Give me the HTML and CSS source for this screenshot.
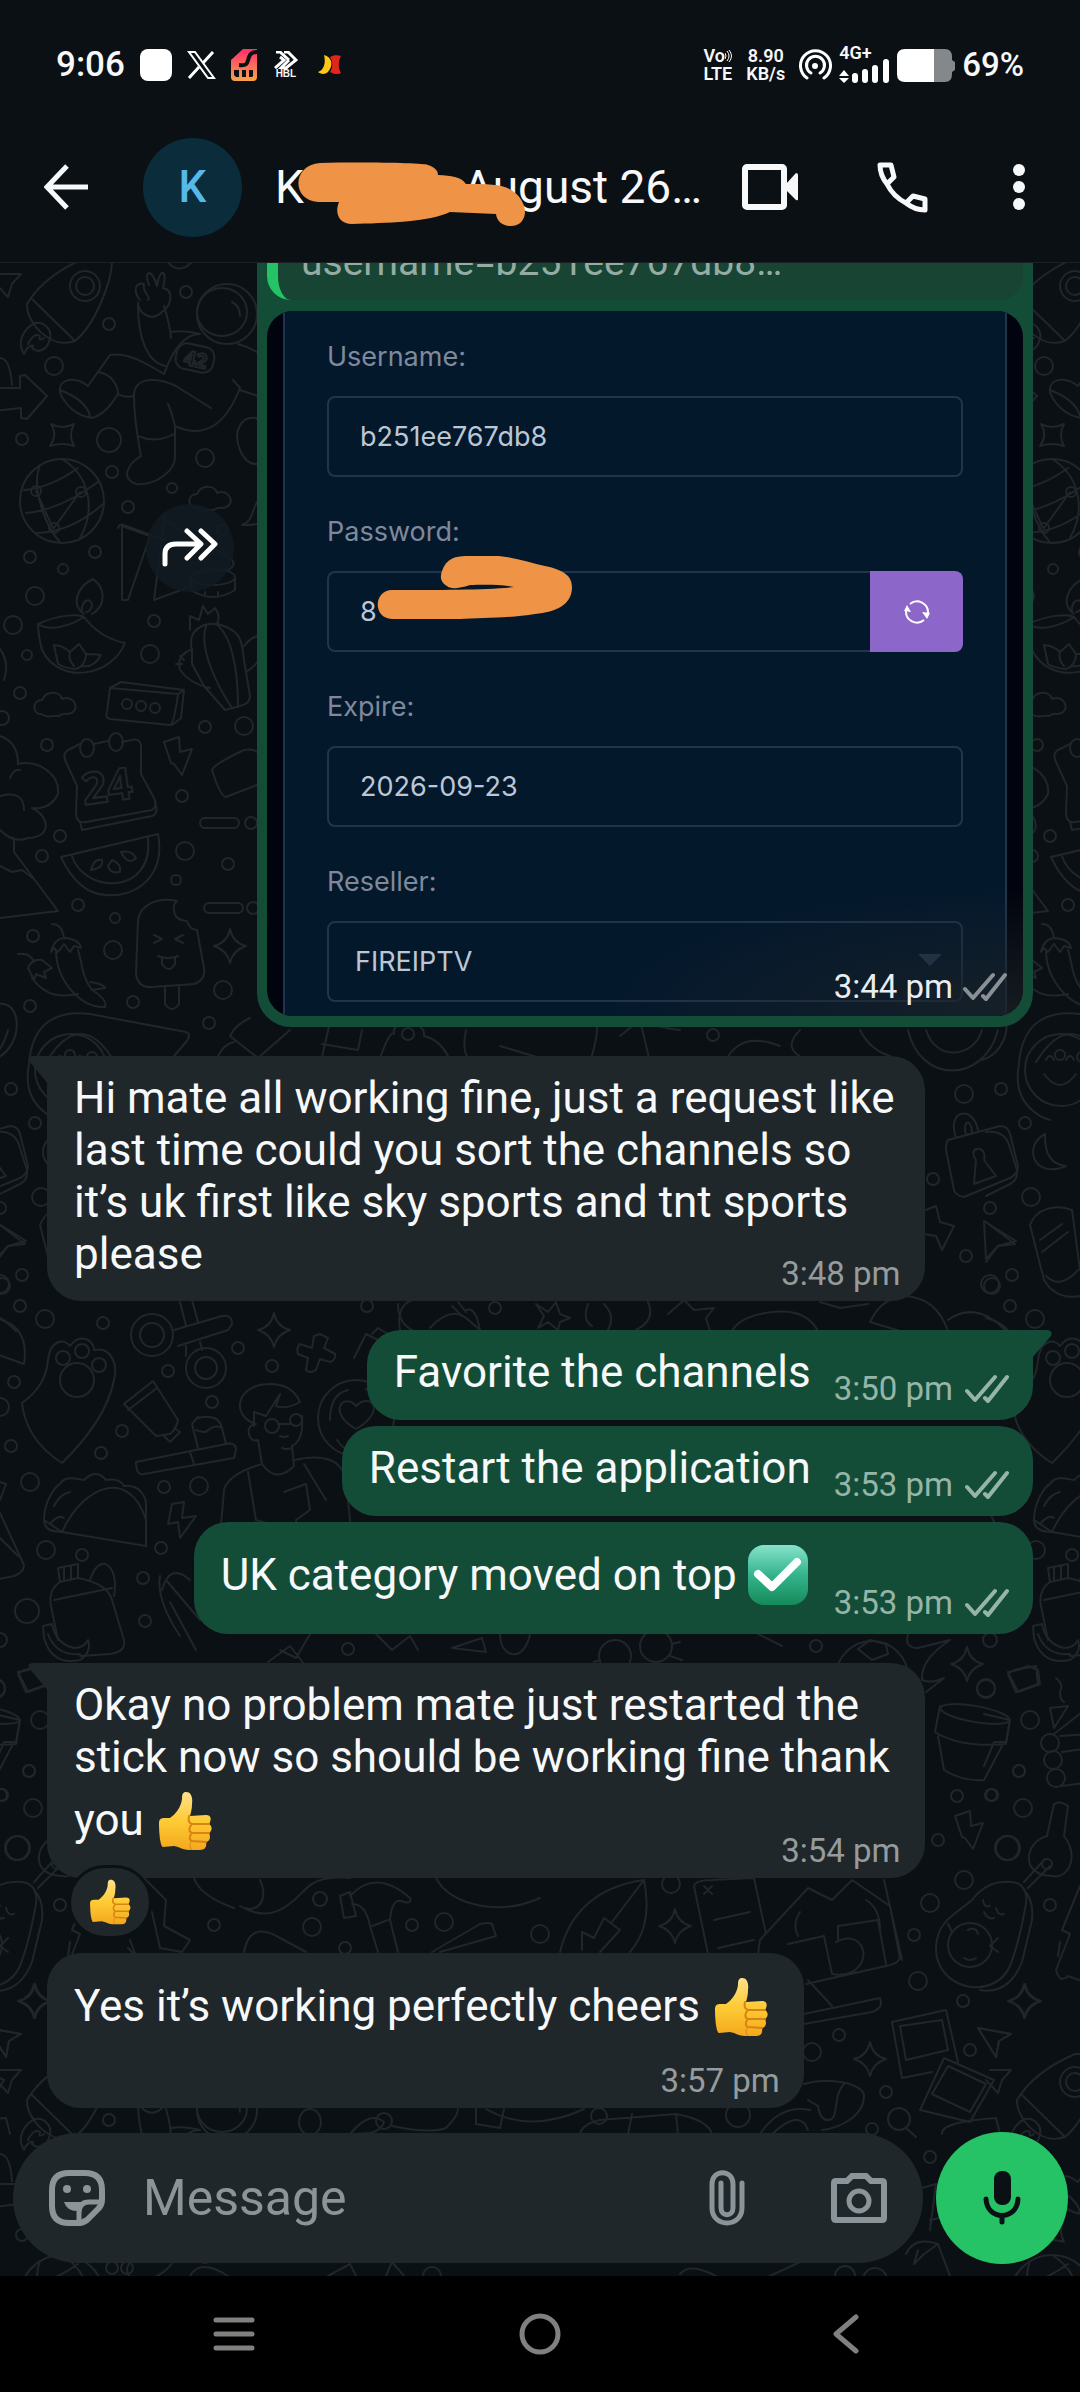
FILE: index.html
```html
<!DOCTYPE html>
<html lang="en">
  <head>
    <meta charset="UTF-8">
    <meta name="viewport" content="width=device-width, initial-scale=1.0">
    <title>Chat</title>
    <link rel="stylesheet" href="styles.css">
  </head>
  <body>
    <!-- shared icons -->
    <svg class="defs" aria-hidden="true">
      <defs>
        <linearGradient id="skin" x1="0" y1="0" x2="0" y2="1">
          <stop offset="0" stop-color="#ffe08a"/>
          <stop offset="0.5" stop-color="#fecb35"/>
          <stop offset="1" stop-color="#f3a81d"/>
        </linearGradient>
        <linearGradient id="checkFill" x1="0" y1="0" x2="0" y2="1">
          <stop offset="0" stop-color="#86e3cb"/>
          <stop offset="0.5" stop-color="#34b48c"/>
          <stop offset="1" stop-color="#158a5a"/>
        </linearGradient>
        <linearGradient id="simFill" x1="0" y1="0" x2="0" y2="1">
          <stop offset="0" stop-color="#ff2f6c"/>
          <stop offset="1" stop-color="#f9a44a"/>
        </linearGradient>
      </defs>
      <symbol id="ticks" viewBox="0 0 44 30">
        <path d="M2 17L10 26L30 3M20 24L23 27L42 3" fill="none" stroke="currentColor" stroke-width="4" stroke-linecap="round" stroke-linejoin="round"/>
      </symbol>
      <symbol id="thumb" viewBox="0 0 54 60">
        <path d="M1 32C1 28 3 27 7 27L12 27C18 23 23 16 24 8C24 3 25 1 28 1C33 1 35 6 34 13C34 18 33 21 32 25L48 24C53 24 54 28 51 33C55 36 54 40 51 42C53 46 52 50 48 51C49 56 47 59 42 59L31 59C25 59 22 56 16 55L5 56C2 55 1 40 1 32Z" fill="url(#skin)"/>
        <path d="M31 25C30 29 31 32 34 33L51 33M34 33C30 37 31 41 34 42L51 42M34 42C31 45 31 49 34 50L48 51" fill="none" stroke="#d98412" stroke-width="2" stroke-linecap="round"/>
        <path d="M34 50C31 53 32 57 34 59" fill="none" stroke="#d98412" stroke-width="1"/>
      </symbol>
      <symbol id="check" viewBox="0 0 60 60">
        <rect width="60" height="60" rx="16" fill="url(#checkFill)"/>
        <path d="M10 29L24 42L49 17" fill="none" stroke="#fff" stroke-width="8" stroke-linecap="round" stroke-linejoin="round"/>
      </symbol>
    </svg>

    <div class="status-bar">
      <div class="status-left">
        <span class="clock">9:06</span>
        <span class="app-square"></span>
        <svg width="29" height="28" viewBox="0 0 29 28"><path d="M2 1H8L27 27H21Z" fill="none" stroke="#fff" stroke-width="2"/><path d="M26 1L16 12M12 16L2 27" stroke="#fff" stroke-width="3"/></svg>
        <svg width="26" height="32" viewBox="0 0 26 32">
          <path d="M12 0H26V28Q26 32 22 32H4Q0 32 0 28V11Z" fill="url(#simFill)"/>
          <path d="M8 16C17 17 16 14 18 8C19 5 21 3 26 3" fill="none" stroke="#0b1014" stroke-width="4"/>
          <path d="M3 21H8V28H5L3 26ZM11 21H15V28H11ZM18 21H22V27L21 28H18Z" fill="#0b1014"/>
        </svg>
        <span class="hbl">
          <svg width="24" height="18" viewBox="0 0 24 18"><path d="M2 1H6L15 9M10 1H14L22 9L12 17H7L15 9M1 17L10 9L6 6" fill="none" stroke="#fff" stroke-width="3"/></svg>
          HBL
        </span>
        <svg width="24" height="20" viewBox="0 0 24 20"><path d="M6 0C14 2 16 10 10 17C7 20 2 19 0 17C6 15 8 8 6 0Z" fill="#fdc715"/><path d="M12 2C15 0 20 0 23 1C20 6 20 13 23 18C20 20 15 19 12 17C15 12 15 7 12 2Z" fill="#e1261c"/></svg>
      </div>
      <div class="status-right">
        <span class="volte">
          <span>Vo<svg width="7" height="14" viewBox="0 0 7 14"><path d="M0 4Q2 7 0 10M2 2Q6 7 2 12M4 1Q9 7 4 13" fill="none" stroke="#fff" stroke-width="1"/></svg></span>
          <span>LTE</span>
        </span>
        <span class="speed"><span>8.90</span><span>KB/s</span></span>
        <svg width="33" height="32" viewBox="0 0 33 32"><g fill="none" stroke="#fff" stroke-width="3" stroke-linecap="round"><path d="M8 29A15 15 0 1 1 25 29"/><path d="M12 24A9 9 0 1 1 21 24"/></g><circle cx="16" cy="17" r="3" fill="#fff"/></svg>
        <span class="signal">
          <span>4G+</span>
          <svg width="51" height="24" viewBox="0 0 51 24"><path d="M5 11L10 17H0ZM0 19H10L5 24Z" fill="#fff"/><path d="M16 17V21M26 13V21M36 9V21M47 3V21" stroke="#fff" stroke-width="6" stroke-linecap="round"/></svg>
        </span>
        <svg width="58" height="33" viewBox="0 0 58 33"><path d="M37 0H48Q55 0 55 8V11L58 13V21L55 23V25Q55 33 48 33H37Z" fill="#85888b"/><path d="M8 0H37V33H8Q0 33 0 25V8Q0 0 8 0Z" fill="#fff"/></svg>
        <span class="battery-level">69%</span>
      </div>
    </div>

    <header class="chat-header">
      <button type="button" class="icon-btn" aria-label="Back">
        <svg width="44" height="46" viewBox="0 0 44 46"><path d="M23 2L3 23L23 44M3 23H44" fill="none" stroke="#f7f8fa" stroke-width="5"/></svg>
      </button>
      <span class="avatar">K</span>
      <h1 class="chat-name">
        <span class="first">K</span><span>August 26…</span>
        <svg class="scribble" width="230" height="64" viewBox="297 162 230 64"><path d="M320 163C365 162 425 163 428 165C434 167 438 170 438 175C452 176 460 176 466 184C490 184 505 184 514 192C522 198 525 206 525 213C524 222 518 226 511 226C503 226 497 222 496 214L450 212C430 222 385 223 352 224C340 224 334 214 339 202L318 202C291 200 292 165 320 163Z" fill="#ef9347"/></svg>
      </h1>
      <div class="header-actions">
        <button type="button" class="icon-btn" aria-label="Video call">
          <svg width="56" height="46" viewBox="0 0 56 46"><rect x="3" y="3" width="39" height="40" rx="2" fill="none" stroke="#f7f8fa" stroke-width="6"/><path d="M44 20L54 9Q56 9 56 11V35Q56 37 54 36L44 26Z" fill="#f7f8fa"/></svg>
        </button>
        <button type="button" class="icon-btn" aria-label="Voice call">
          <svg width="51" height="51" viewBox="0 0 51 51"><path d="M3 3H14L17 15L10 22C6 17 3 10 3 3ZM10 22C14 30 21 37 29 41L36 34L48 37V48C41 48 34 45 29 41" fill="none" stroke="#f7f8fa" stroke-width="5" stroke-linejoin="round"/></svg>
        </button>
        <button type="button" class="icon-btn menu-btn" aria-label="More options">
          <svg width="12" height="46" viewBox="0 0 12 46"><g fill="#f7f8fa"><circle cx="6" cy="6" r="6"/><circle cx="6" cy="23" r="6"/><circle cx="6" cy="40" r="6"/></g></svg>
        </button>
      </div>
    </header>

    <main class="chat">
      <!-- doodle wallpaper, one tile repeated to the right, left and below -->
      <svg class="wallpaper" viewBox="0 263 1080 2013" preserveAspectRatio="xMidYMin slice" aria-hidden="true">
        <defs>
          <path id="star4" d="M0 -17Q3 -3 16 0Q3 4 0 17Q-3 4 -16 0Q-3 -3 0 -17Z"/>
          <path id="cloud" d="M-14 8C-23 8 -23 -6 -13 -6C-9 -16 5 -15 7 -7C20 -12 27 6 13 8C8 7 6 8 4 10C-2 8 -5 14 -14 8Z"/>
          <path id="bolt" d="M-15 -14L0 -19L1 -4L13 -7L3 19L-5 8L-8 7Z"/>
          <path id="plane" d="M-16 -14L17 -8L5 -1L2 15Z"/>
          <g id="tile">
            <!-- rocket and star -->
            <path d="M27 304C40 282 62 268 85 258H112C113 280 95 325 75 341L31 298M27 304C26 322 50 350 75 341"/>
            <circle cx="85" cy="286" r="15"/><circle cx="85" cy="286" r="9"/>
            <path d="M24 354C16 342 24 328 35 323C44 321 52 330 50 338C48 350 38 354 32 348C36 344 28 344 24 354ZM28 344Q34 332 40 336Q38 342 44 338"/>
            <path d="M0 274L21 274L12 284L8 297L-4 284M-8 388L20 388V376L25 375L47 396L27 419L21 418V408L-8 411M0 358Q10 358 12 385"/>
            <!-- astronaut -->
            <path d="M138 305C138 340 148 362 165 366M164 306Q170 325 171 338M140 300C132 290 136 282 144 284C142 294 152 296 148 300M149 285C143 270 152 268 157 286C160 266 168 270 163 288C174 290 172 305 162 312C152 322 138 314 138 302"/>
            <ellipse cx="227" cy="314" rx="30" ry="30"/><ellipse cx="222" cy="312" rx="25" ry="24"/><path d="M232 302Q240 306 240 316M171 332Q185 330 200 334C184 334 172 352 164 374C150 366 130 352 110 355L88 386C76 376 58 378 60 392C64 404 76 416 92 418C106 414 114 400 118 394Q124 398 134 396M98 372C112 374 118 386 118 394M60 390Q86 400 90 416"/>
            <rect x="176" y="345" width="38" height="26" rx="10" transform="rotate(12 195 358)"/>
            <path d="M134 396C134 375 160 378 176 386L211 408M134 396C134 420 138 440 141 456C128 464 120 478 136 484C156 486 176 470 175 456V426C172 414 170 408 168 404M175 426C205 440 226 424 240 388L233 380M138 436Q156 444 174 434M238 344Q260 350 280 370L270 400L240 390"/>
            <path d="M166 260Q178 276 192 262M240 450C232 430 242 416 256 418C272 430 270 460 256 464Q246 464 240 450Z"/>
            <!-- globe -->
            <circle cx="62" cy="501" r="42"/><path d="M24 490Q50 488 78 468M26 513Q60 510 98 482M36 533Q72 532 103 504M40 465C30 490 48 530 60 542M62 459C90 476 96 510 80 538M36 491L53 528M80 492L54 528"/><circle cx="36" cy="491" r="5"/><circle cx="81" cy="492" r="5"/><circle cx="54" cy="528" r="5"/>
            <!-- flags and brush -->
            <path d="M122 526L150 536L128 600L122 600ZM118 528Q120 522 126 526L165 540M165 515L154 600L192 586M165 515Q162 518 164 520L230 558Q238 564 228 570L192 574M242 525C256 520 250 506 262 496L280 510Q268 526 242 525Z"/>
            <ellipse cx="213" cy="577" rx="22" ry="8"/><path d="M191 578V590Q213 604 235 590V578M205 592V596M218 592V596"/>
            <!-- lamp -->
            <path d="M38 624C60 614 80 614 84 617Q100 638 125 643C112 676 60 686 42 650Q38 634 38 624ZM38 624C50 632 70 626 84 617M84 614C70 604 78 586 93 579C106 588 106 606 92 614M82 612C80 600 92 596 92 606Q90 612 86 612M54 645Q62 645 70 652L79 644L86 654Q94 654 101 655Q94 668 82 666L76 669Q64 668 58 664ZM70 652Q68 660 74 666M86 654Q86 662 80 667"/>
            <!-- cactus -->
            <path d="M190 630L190 616L199 620L203 606L208 614L215 608Q221 616 217 624M192 650C186 626 210 620 224 626C240 632 242 640 244 660L250 696Q250 704 240 706L225 710L204 686L192 664ZM206 626C198 650 220 690 232 708M216 624C232 636 238 670 238 706M244 646Q252 636 260 636M246 672Q256 666 262 656M190 650Q176 656 180 670Q190 684 210 688M176 664L182 664M180 656L184 660"/>
            <!-- speaker -->
            <path d="M110 688L178 694Q174 724 170 725L110 719Q105 718 107 712ZM110 688L121 682L184 690L178 694M184 690L181 718L172 725"/>
            <circle cx="127" cy="704" r="5"/><circle cx="141" cy="706" r="5"/><circle cx="155" cy="708" r="5"/>
            <!-- calendar -->
            <path d="M80 744L68 750Q62 754 66 762L77 786L76 812Q76 824 86 822L152 810Q158 806 154 798L141 774L141 746Q140 738 132 740L122 742M94 744L108 741M80 822L82 830L152 816Q158 814 156 806"/>
            <ellipse cx="87" cy="748" rx="7" ry="9"/><ellipse cx="116" cy="742" rx="7" ry="9"/>
            <!-- melon -->
            <path d="M61 857L158 834C166 876 136 898 106 895C82 894 68 872 61 857ZM72 856C84 894 154 896 148 838M91 870Q94 858 102 860Q104 868 91 870ZM112 860Q122 864 120 872Q110 874 108 866ZM121 852Q132 850 136 858Q128 866 121 852Z"/>
            <!-- ice cream -->
            <path d="M177 901C156 896 140 906 138 920L136 974Q138 988 152 987L194 984Q206 980 204 968L197 930Q190 930 187 921Q172 920 174 905ZM165 988V1004Q172 1014 179 1004V987M154 935L162 939L154 943M183 935L175 939L183 943M158 956Q168 960 178 956M162 958V964Q169 974 175 964V957"/>
            <!-- flower, pyramid, balls -->
            <path d="M0 736Q18 742 18 764C36 760 60 772 58 794Q50 810 32 808C52 818 50 838 28 838Q14 844 0 830M10 778Q14 768 20 770M0 796Q24 790 24 810M14 838V852L58 911L0 918M0 866L12 872L22 870L34 879"/>
            <path d="M-10 640Q12 655 4 680M-8 1006C24 992 26 1050 -8 1060"/>
            <path d="M212 770Q214 764 244 750Q256 748 262 756L270 780L226 797Q220 796 212 770Z"/>
            <rect x="200" y="818" width="39" height="10" rx="5"/><rect x="204" y="903" width="39" height="10" rx="5"/><circle cx="251" cy="823" r="6"/><circle cx="253" cy="908" r="6"/>
            <!-- chillies -->
            <path d="M52 924Q62 924 64 938M51 952Q54 938 66 938Q80 940 81 948L74 946L70 952L64 944L58 952L54 948ZM56 950C56 980 80 1008 105 1007Q108 1000 92 990C82 978 82 962 78 950M18 954Q30 952 34 962M28 968Q32 958 42 960L52 968L44 972L46 978L36 974L34 980ZM32 978C48 1000 66 996 78 994M90 982Q104 984 105 988L92 990"/>
            <!-- mask, megaphone, bear -->
            <path d="M29 1064C32 1020 60 1010 90 1014L186 1032Q192 1034 186 1042L174 1056M46 1062Q80 1008 112 1058"/><circle cx="70" cy="1055" r="5"/><circle cx="92" cy="1057" r="5"/>
            <path d="M29 1064C20 1110 60 1120 60 1120M230 1036L258 1058L290 1030M230 1036Q236 1024 250 1018M218 1056Q224 1044 234 1042M322 1057L330 1022M322 1044L358 1050L362 1030"/>
            <path d="M380 1058Q390 1030 394 1034C390 1020 426 1018 424 1036Q440 1040 448 1056"/><circle cx="408" cy="1034" r="6"/><path d="M466 1030Q460 1060 476 1062M500 1046L540 1058"/>
            <path d="M590 1062Q600 1030 596 1020M620 1036L640 1020Q660 1028 680 1030M640 1020L650 1062M725 1062Q740 1030 780 1046M800 1030Q780 1050 808 1060"/>
            <!-- smiley and spiral -->
            <circle cx="1061" cy="1070" r="36"/><path d="M1046 1060Q1050 1052 1054 1060M1066 1060Q1070 1052 1074 1060M1044 1074Q1060 1096 1076 1074"/>
            <path d="M908 1030C920 1084 984 1084 998 1030M926 1030C936 1062 974 1058 982 1030M860 1030Q870 1050 890 1056"/>
            <!-- lock, moon -->
            <path d="M948 1140L1000 1126Q1008 1126 1010 1134L1018 1166Q1018 1174 1010 1178L964 1197Q956 1196 954 1190L946 1150Q946 1142 948 1140ZM956 1138C946 1108 974 1106 978 1130M966 1135C962 1118 972 1120 972 1132M976 1160C966 1146 988 1144 984 1160L996 1176L974 1184Z"/>
            <path d="M1045 1134C1022 1146 1034 1180 1066 1166Q1044 1164 1045 1134Z"/>
            <path d="M926 1210L936 1206L940 1222L954 1226L942 1250L936 1236L924 1234"/>
            <path d="M984 1221L1016 1241L998 1246L986 1259ZM1030 1225C1036 1208 1056 1204 1072 1210L1080 1270M1030 1225L1044 1280Q1056 1300 1080 1296M1040 1240L1062 1224M1042 1252L1068 1232M1046 1276Q1060 1290 1078 1270"/>
            <path d="M-4 1132Q16 1130 20 1148L27 1170Q28 1180 20 1184L-4 1196M-4 1222L25 1244L8 1246L-4 1262"/>
            <path d="M-4 1318Q30 1326 24 1364L-4 1354"/>
            <!-- scissors -->
            <circle cx="152" cy="1335" r="21"/><circle cx="152" cy="1335" r="12"/><circle cx="206" cy="1368" r="20"/><circle cx="206" cy="1368" r="11"/>
            <path d="M174 1330L222 1316Q232 1314 232 1324L228 1330L178 1346M180 1302L186 1326M192 1300L198 1322M186 1346L186 1356M200 1342L202 1350"/>
            <use href="#star4" x="274" y="1330"/>
            <path d="M314 1336L320 1334L328 1338L324 1348L335 1354Q336 1360 330 1362L320 1359L316 1370Q310 1374 306 1370L308 1358L298 1354Q296 1348 300 1344L312 1348Z"/>
            <path d="M354 1358L366 1334L398 1350M372 1334L378 1328L388 1334M400 1330Q396 1306 412 1300M430 1328Q450 1306 466 1318L480 1330"/>
            <!-- dough, flower, star and hat between the bubbles -->
            <path d="M398 1304Q398 1324 414 1331M452 1306L462 1316M458 1302L466 1312M466 1310Q476 1306 480 1331M536 1304L548 1312L556 1302L560 1314L570 1318L560 1322L558 1330L548 1322L538 1328L544 1316ZM588 1304Q582 1320 592 1326M604 1304Q616 1316 608 1330M648 1302Q656 1320 636 1330M668 1314L684 1300L694 1310L714 1308L706 1318L710 1331M732 1331Q740 1316 772 1312Q806 1308 818 1331M820 1302L840 1308L868 1304M870 1322Q880 1300 902 1296Q936 1296 948 1331M870 1322L900 1331M948 1320Q976 1300 1006 1331"/>
            <!-- paw pick -->
            <path d="M22 1403Q46 1386 48 1360C50 1340 64 1338 70 1346C80 1332 94 1340 94 1350C112 1346 118 1366 114 1380Q106 1420 62 1463Q26 1440 22 1403Z"/>
            <circle cx="77" cy="1380" r="17"/><circle cx="63" cy="1358" r="7"/><circle cx="82" cy="1351" r="7"/><circle cx="99" cy="1365" r="7"/>
            <!-- tube and brush -->
            <path d="M124 1404L153 1381L178 1420Q176 1430 170 1434L156 1436ZM128 1410L157 1388M164 1436L170 1442L180 1432L174 1428"/>
            <path d="M136 1462L226 1444Q236 1442 236 1450L234 1458L144 1474Q136 1476 136 1462ZM190 1452L194 1464M198 1448L192 1424Q200 1414 198 1418C214 1414 220 1420 222 1428L226 1444M196 1430Q206 1434 208 1430Q216 1424 222 1428"/>
            <!-- reader -->
            <path d="M256 1424C230 1416 236 1384 270 1384Q292 1384 300 1402Q286 1410 276 1406L280 1394L266 1416L254 1412V1426M256 1424C244 1424 248 1444 258 1440L262 1464Q276 1484 294 1466L292 1446Q304 1440 302 1416M292 1448Q286 1450 282 1448M262 1464Q228 1474 224 1490L218 1560M294 1460Q340 1450 346 1480L354 1560M248 1472L256 1520L290 1530M304 1464L326 1500"/>
            <circle cx="272" cy="1426" r="7"/><circle cx="296" cy="1420" r="6"/><path d="M278 1424H290M280 1436Q284 1438 288 1436"/>
            <path d="M284 1492L306 1484L310 1510L296 1520L298 1546L288 1560"/>
            <!-- ball with heart -->
            <circle cx="356" cy="1418" r="38"/><path d="M330 1420Q330 1394 348 1390M366 1389Q384 1394 384 1412M337 1440Q344 1450 352 1452M356 1429C326 1412 344 1392 356 1406C370 1392 388 1410 356 1429Z"/>
            <!-- taco -->
            <path d="M44 1520C44 1500 56 1486 60 1484C66 1474 80 1480 84 1480Q96 1468 106 1480Q120 1478 124 1486C142 1484 146 1500 146 1504L146 1546L62 1532C84 1484 130 1468 146 1520M62 1532Q44 1532 44 1520ZM54 1506Q60 1494 70 1492M50 1524Q58 1514 64 1518"/>
            <path d="M-6 1480L6 1484L0 1500M-6 1500L24 1565Q24 1572 14 1576L-6 1580M-6 1532L18 1556"/>
            <path d="M172 1504L184 1502L182 1518L196 1516L180 1538L178 1522L168 1524Z"/>
            <!-- bottle and banana -->
            <path d="M58 1568L78 1564V1578L60 1582ZM64 1567V1580M71 1566V1579M60 1582Q48 1590 51 1606L58 1640M78 1578Q108 1584 112 1600L124 1640Q126 1652 110 1654L80 1656M54 1600L112 1588M90 1580Q96 1562 106 1564Q118 1572 114 1596"/>
            <path d="M43 1626L52 1624Q56 1644 74 1648Q84 1648 88 1640Q92 1652 80 1660Q52 1666 44 1638Z"/><path d="M48 1634Q56 1656 80 1654"/>
            <path d="M162 1590Q170 1562 190 1580M166 1580L200 1620M170 1602L196 1650M160 1576Q156 1600 180 1636"/>
            <!-- pieces under the sent messages -->
            <path d="M268 1662L290 1646L304 1664M310 1634L296 1658L280 1650M376 1634L392 1650L410 1636L418 1650M452 1648L482 1638L486 1652ZM500 1634C500 1658 524 1664 530 1634"/>
            <circle cx="615" cy="1656" r="16"/><circle cx="656" cy="1646" r="16"/><path d="M672 1644L680 1642M670 1656L682 1660M594 1662L600 1660M758 1634L782 1646"/>
            <circle cx="872" cy="1677" r="36"/><path d="M858 1649L870 1640L886 1644L888 1654L872 1660ZM908 1634Q904 1648 918 1648L950 1640Q920 1660 922 1680M922 1680Q930 1684 944 1678L926 1692"/>
            <use href="#star4" x="967" y="1664"/>
            <path d="M1008 1672L1018 1670L1028 1666L1038 1670L1040 1684L1018 1692ZM1056 1678Q1064 1684 1060 1692Q1060 1700 1064 1702"/>
            <!-- pot -->
            <path d="M940 1706L935 1732Q960 1748 1006 1744L1010 1720M938 1736L944 1770Q964 1782 984 1780L1002 1746"/><ellipse cx="975" cy="1714" rx="35" ry="8" transform="rotate(10 975 1714)"/>
            <path d="M1050 1708L1068 1706L1054 1728ZM1054 1734L1090 1706M1060 1736L1090 1734M1062 1752L1090 1748M1062 1786L1090 1782"/><circle cx="1050" cy="1743" r="9"/><circle cx="1053" cy="1760" r="9"/><circle cx="1056" cy="1778" r="9"/>
            <path d="M-6 1714L20 1720L16 1742L4 1742L-6 1766M18 1674L24 1670L46 1666L48 1684L26 1692Z"/>
            <!-- key and avocado -->
            <path d="M1047 1836L1054 1804Q1060 1800 1068 1806L1064 1836C1080 1856 1068 1880 1052 1876C1020 1876 1024 1842 1047 1836ZM1044 1860L1024 1882M1050 1866L1028 1888"/><circle cx="1047" cy="1864" r="5"/>
            <path d="M1004 1882C1020 1880 1028 1888 1026 1904C1022 1924 1020 1940 1010 1966C994 2002 934 1990 936 1946C938 1920 956 1914 972 1900Q986 1882 1004 1882ZM1024 1890Q1034 1900 1032 1920L1022 1962C1010 1992 990 1992 980 1990"/>
            <circle cx="970" cy="1945" r="22"/><path d="M983 1900Q984 1908 990 1906M996 1908Q998 1916 1004 1914M984 1912Q988 1920 994 1918M964 1958Q970 1962 976 1958M968 1930Q976 1926 978 1934M998 1938L990 1946L998 1952M952 1932L948 1924"/>
            <path d="M1080 1886L1062 1930L1070 1934L1056 1970Q1060 1984 1068 1976L1090 1984M70 1942L68 1956M130 1940L136 1956L128 1948"/>
            <use href="#bolt" x="970" y="1830"/>
            <!-- plug cable, hammer, board -->
            <path d="M144 1878L166 1900L164 1926L190 1940L182 1952L160 1948L152 1912M194 1878Q200 1896 234 1908M260 1880C270 1900 256 1916 240 1906M240 1906C280 1930 300 1890 312 1884Q324 1876 350 1878M244 1952Q250 1920 280 1938L306 1952"/>
            <path d="M340 1896L350 1892L356 1916L344 1918ZM350 1896Q376 1868 410 1898Q412 1904 404 1902Q392 1896 390 1920L398 1952M352 1904Q366 1904 370 1926L378 1952M372 1926L388 1920"/><circle cx="320" cy="1899" r="7"/>
            <path d="M432 1952L480 1924Q488 1922 492 1924L496 1936L440 1952M436 1878C450 1906 500 1916 540 1898M560 1952C570 1910 600 1886 644 1880C652 1920 640 1940 630 1952M582 1950L582 1932L594 1938L604 1918L620 1930L600 1952M612 1922L644 1880"/>
            <use href="#star4" x="675" y="1926"/>
            <path d="M694 1886Q696 1880 712 1880L754 1878L766 1934M694 1886L708 1954M704 1886L712 1894M712 1886L704 1894M714 1920L750 1912M718 1948L754 1940M758 1954L760 1940L808 1888L832 1900L852 1880L890 1906L900 1958Q898 1964 886 1966L806 1984M884 1880L902 1960M788 1944L824 1936L832 1974M798 1936Q792 1924 800 1912M838 1940V1926L878 1920L886 1964M836 1942C862 1928 874 1960 852 1972Q844 1976 832 1974M866 1900Q880 1908 880 1930"/>
            <path d="M808 1980L832 2006M804 2014L880 1998Q884 2008 872 2012L804 2024"/>
            <!-- photos -->
            <path d="M892 2022L946 2010L958 2062M892 2022L902 2078L932 2072M900 2026L942 2020L948 2050L906 2060ZM944 2058L994 2080L970 2122L920 2110ZM948 2066L986 2084L970 2112L932 2094Z"/>
            <use href="#plane" x="994" y="2042"/><use href="#star4" x="870" y="2059"/><use href="#star4" x="1025" y="2001"/>
            <path d="M804 2084C830 2076 864 2084 864 2096C864 2116 840 2128 822 2130M844 2084C832 2096 840 2120 828 2120Q820 2120 818 2106L808 2100M760 2134Q780 2104 810 2110M772 2134Q800 2108 808 2130"/>
            <circle cx="899" cy="2119" r="11"/><path d="M906 2128L916 2137M942 2134Q940 2122 996 2118L1000 2134"/>
            <!-- open jars above the message box -->
            <path d="M486 2109Q530 2134 584 2109M580 2134Q582 2124 600 2120L676 2114Q708 2120 712 2134M632 2114L628 2134M676 2114L678 2134M350 2134Q370 2110 384 2122C380 2134 366 2134 354 2134M392 2126Q430 2134 446 2128Q458 2116 458 2109M476 2109L476 2124L500 2128L504 2109"/><circle cx="384" cy="2121" r="8"/><ellipse cx="310" cy="2122" rx="11" ry="13"/>
            <circle cx="599" cy="2116" r="8"/><circle cx="738" cy="2115" r="12"/>
            <!-- feathers by the mic button -->
            <path d="M922 2188L936 2184L930 2230M906 2254Q914 2236 938 2244L924 2254L914 2264L918 2250M938 2244L950 2276M930 2220L950 2216"/>
            <path d="M190 2276Q200 2258 228 2276M386 2276L392 2262L404 2276M680 2274Q690 2262 716 2276M328 2276L350 2264L356 2276M770 2276L800 2262" />
            <!-- stars, clouds, bolts -->
            <path d="M51 424Q62 430 74 424Q68 435 74 446Q62 442 50 446Q58 435 51 424Z"/>
            <use href="#star4" x="230" y="946"/><use href="#cloud" x="55" y="706"/><use href="#cloud" x="210" y="500"/><use href="#bolt" x="179" y="756"/>
            <use href="#star4" x="34" y="2001"/><use href="#plane" x="4" y="2042"/>
            <!-- bubbles -->
            <circle cx="109" cy="324" r="6"/><circle cx="54" cy="366" r="9"/><circle cx="22" cy="439" r="6"/><circle cx="109" cy="440" r="12"/><circle cx="112" cy="472" r="6"/><circle cx="128" cy="507" r="6"/><circle cx="172" cy="488" r="5"/><circle cx="205" cy="458" r="9"/><circle cx="186" cy="292" r="6"/><circle cx="30" cy="557" r="6"/><circle cx="95" cy="552" r="6"/><circle cx="63" cy="569" r="5"/><circle cx="35" cy="596" r="9"/><circle cx="13" cy="625" r="9"/><circle cx="27" cy="655" r="5"/><circle cx="154" cy="621" r="6"/><circle cx="150" cy="654" r="9"/><circle cx="20" cy="693" r="6"/><circle cx="47" cy="745" r="6"/><circle cx="2" cy="718" r="7"/>
            <circle cx="60" cy="836" r="6"/><circle cx="42" cy="856" r="6"/><circle cx="205" cy="727" r="6"/><circle cx="244" cy="726" r="9"/><circle cx="182" cy="796" r="6"/><circle cx="185" cy="851" r="9"/><circle cx="176" cy="880" r="5"/><circle cx="228" cy="864" r="6"/><circle cx="78" cy="905" r="6"/><circle cx="115" cy="918" r="5"/><circle cx="113" cy="950" r="9"/><circle cx="33" cy="936" r="6"/><circle cx="30" cy="1006" r="6"/><circle cx="133" cy="1002" r="6"/><circle cx="209" cy="1023" r="6"/><circle cx="223" cy="990" r="9"/><circle cx="222" cy="530" r="5"/>
            <circle cx="11" cy="1089" r="6"/><circle cx="35" cy="1123" r="6"/><circle cx="41" cy="1197" r="9"/><circle cx="22" cy="1275" r="6"/><circle cx="2" cy="1286" r="8"/><circle cx="20" cy="1306" r="6"/><circle cx="45" cy="1319" r="9"/><circle cx="103" cy="1323" r="6"/><circle cx="14" cy="1382" r="6"/><circle cx="0" cy="1407" r="9"/><circle cx="168" cy="1371" r="6"/><circle cx="238" cy="1348" r="6"/><circle cx="272" cy="1366" r="6"/><circle cx="212" cy="1402" r="6"/><circle cx="122" cy="1431" r="6"/><circle cx="11" cy="1446" r="6"/><circle cx="101" cy="1453" r="6"/><circle cx="30" cy="1482" r="9"/><circle cx="164" cy="1487" r="6"/><circle cx="199" cy="1486" r="9"/><circle cx="46" cy="1550" r="9"/><circle cx="82" cy="1555" r="6"/><circle cx="161" cy="1548" r="6"/><circle cx="143" cy="1578" r="6"/><circle cx="27" cy="1611" r="12"/><circle cx="145" cy="1621" r="6"/><circle cx="0" cy="1640" r="7"/><circle cx="348" cy="1649" r="6"/><circle cx="816" cy="1646" r="6"/><circle cx="367" cy="1306" r="6"/><circle cx="495" cy="1308" r="6"/>
            <circle cx="964" cy="1094" r="9"/><circle cx="933" cy="1179" r="6"/><circle cx="990" cy="1208" r="6"/><circle cx="966" cy="1256" r="6"/><circle cx="990" cy="1284" r="9"/><circle cx="713" cy="1035" r="6"/>
            <circle cx="-4" cy="1688" r="9"/><circle cx="40" cy="1720" r="9"/><circle cx="29" cy="1771" r="6"/><circle cx="2" cy="1795" r="6"/><circle cx="33" cy="1808" r="9"/><circle cx="18" cy="1848" r="12"/><circle cx="60" cy="1905" r="6"/><circle cx="214" cy="1925" r="6"/><circle cx="312" cy="1927" r="9"/><circle cx="345" cy="1948" r="6"/><circle cx="412" cy="1925" r="6"/><circle cx="444" cy="1922" r="9"/><circle cx="540" cy="1934" r="9"/><circle cx="671" cy="1884" r="9"/>
            <circle cx="986" cy="1689" r="9"/><circle cx="1019" cy="1771" r="6"/><circle cx="957" cy="1796" r="6"/><circle cx="991" cy="1795" r="6"/><circle cx="938" cy="1840" r="6"/><circle cx="1007" cy="1848" r="12"/><circle cx="964" cy="1880" r="9"/><circle cx="930" cy="1903" r="9"/><circle cx="914" cy="1935" r="6"/><circle cx="918" cy="1981" r="9"/><circle cx="963" cy="2001" r="6"/><circle cx="839" cy="2035" r="6"/><circle cx="812" cy="2052" r="9"/><circle cx="970" cy="2050" r="6"/><circle cx="886" cy="2092" r="6"/><circle cx="872" cy="2129" r="6"/><circle cx="930" cy="2157" r="6"/><circle cx="845" cy="2276" r="10"/><circle cx="875" cy="2280" r="12"/><circle cx="432" cy="2276" r="9"/><circle cx="127" cy="2268" r="6"/>
          </g>
        </defs>
        <g class="doodles">
          <use href="#tile"/>
          <use href="#tile" x="990"/>
          <use href="#tile" x="-990"/>
          <use href="#tile" y="1796"/>
          <use href="#tile" x="990" y="1796"/>
        </g>
        <g class="doodle-text">
          <text x="84" y="805" font-size="44" transform="rotate(-8 84 805)">24</text>
          <text x="183" y="364" font-size="20" transform="rotate(12 183 364)">42</text>
        </g>
      </svg>

      <div class="messages">
        <div class="row sent media-row">
          <button type="button" class="forward-btn" aria-label="Forward">
            <svg width="56" height="40" viewBox="0 0 56 40"><path d="M3 36V26Q3 16 14 16H38M25 3L39 16L25 30M39 3L53 16L39 30" fill="none" stroke="#fff" stroke-width="5" stroke-linecap="round" stroke-linejoin="round"/></svg>
          </button>
          <div class="bubble media-bubble">
            <p class="quote">username=b251ee767db8…</p>
            <div class="media">
              <form class="account-form">
                <div class="field">
                  <label for="username">Username:</label>
                  <input type="text" id="username" value="b251ee767db8" readonly>
                </div>
                <div class="field">
                  <label for="password">Password:</label>
                  <div class="input-group">
                    <input type="text" id="password" value="8" readonly>
                    <button type="button" class="refresh-btn" aria-label="Generate password">
                      <svg width="26" height="26" viewBox="0 0 26 26"><path d="M6 5A11 11 0 0 1 24 14M20 21A11 11 0 0 1 2 12" fill="none" stroke="#fff" stroke-width="2"/><path d="M18 13L26 14L23 20ZM0 12L3 6L7 13Z" fill="#fff"/></svg>
                    </button>
                    <svg class="scribble" width="196" height="66" viewBox="376 554 196 66"><path d="M442 571C446 559 455 556 466 556H495C512 556 530 563 545 566C564 570 572 576 572 587C572 605 556 612 535 614C510 618 480 618 460 619H392C372 618 374 590 392 590C440 590 490 590 514 587C500 584 480 585 470 585C458 589 450 589 447 586C440 582 440 576 442 571Z" fill="#ef9347"/></svg>
                  </div>
                </div>
                <div class="field">
                  <label for="expire">Expire:</label>
                  <input type="text" id="expire" value="2026-09-23" readonly>
                </div>
                <div class="field select-field">
                  <label for="reseller">Reseller:</label>
                  <select id="reseller"><option>FIREIPTV</option></select>
                </div>
              </form>
              <div class="media-meta"><time>3:44 pm</time><svg class="ticks"><use href="#ticks"/></svg></div>
            </div>
          </div>
        </div>

        <div class="row received">
          <div class="bubble tail">
            <p>Hi mate all working fine, just a request like last time could you sort the channels so it’s uk first like sky sports and tnt sports please</p>
            <time class="meta">3:48 pm</time>
          </div>
        </div>

        <div class="row sent">
          <div class="bubble tail">
            <p>Favorite the channels</p>
            <div class="meta"><time>3:50 pm</time><svg class="ticks"><use href="#ticks"/></svg></div>
          </div>
        </div>
        <div class="row sent next">
          <div class="bubble">
            <p>Restart the application</p>
            <div class="meta"><time>3:53 pm</time><svg class="ticks"><use href="#ticks"/></svg></div>
          </div>
        </div>
        <div class="row sent next">
          <div class="bubble">
            <p>UK category moved on top <svg class="emoji" viewBox="0 0 60 74" role="img" aria-label="check mark"><use href="#check" y="7" width="60" height="60"/></svg></p>
            <div class="meta"><time>3:53 pm</time><svg class="ticks"><use href="#ticks"/></svg></div>
          </div>
        </div>

        <div class="row received">
          <div class="bubble tail">
            <p>Okay no problem mate just restarted the stick now so should be working fine thank you <svg class="emoji" viewBox="0 0 60 74" role="img" aria-label="thumbs up"><use href="#thumb" x="3" y="8" width="54" height="60"/></svg></p>
            <time class="meta">3:54 pm</time>
            <button type="button" class="reaction" aria-label="Reaction: thumbs up"><svg width="42" height="46"><use href="#thumb"/></svg></button>
          </div>
        </div>

        <div class="row received after-reaction">
          <div class="bubble short">
            <p>Yes it’s working perfectly cheers <svg class="emoji" viewBox="0 0 60 74" role="img" aria-label="thumbs up"><use href="#thumb" x="3" y="8" width="54" height="60"/></svg></p>
            <time class="meta">3:57 pm</time>
          </div>
        </div>
      </div>

      <form class="composer">
        <div class="message-box">
          <button type="button" class="icon-btn" aria-label="Stickers">
            <svg width="56" height="56" viewBox="0 0 56 56"><path d="M20 3H36Q53 3 53 20V30Q53 35 49 39L38 50Q34 53 29 53H20Q3 53 3 36V20Q3 3 20 3Z" fill="none" stroke="#8b9498" stroke-width="6"/><path d="M30 53V43Q30 32 40 32H53" fill="none" stroke="#8b9498" stroke-width="5"/><circle cx="18" cy="19" r="4" fill="#8b9498"/><circle cx="38" cy="19" r="4" fill="#8b9498"/><path d="M15 32H36Q30 35 28 41Q18 41 15 32Z" fill="#8b9498"/></svg>
          </button>
          <input type="text" class="message-input" placeholder="Message" aria-label="Message">
          <button type="button" class="icon-btn" aria-label="Attach">
            <svg width="36" height="56" viewBox="0 0 36 56"><path d="M33 13V38C33 58 3 58 3 38V14C3 -1 24 -1 24 14V38C24 47 12 47 12 38V13" fill="none" stroke="#8b9498" stroke-width="5" stroke-linecap="round"/></svg>
          </button>
          <button type="button" class="icon-btn" aria-label="Camera">
            <svg width="56" height="50" viewBox="0 0 56 50"><path d="M5 8H16L21 3H35L40 8H51Q53 8 53 10V45Q53 47 51 47H5Q3 47 3 45V10Q3 8 5 8Z" fill="none" stroke="#8b9498" stroke-width="6"/><circle cx="28" cy="28" r="10" fill="none" stroke="#8b9498" stroke-width="5"/></svg>
          </button>
        </div>
        <button type="button" class="mic-btn" aria-label="Record voice message">
          <svg width="38" height="54" viewBox="0 0 38 54"><rect x="11" y="0" width="17" height="34" rx="8" fill="#0b1014"/><path d="M3 28C4 50 34 50 35 28M19 45V51" fill="none" stroke="#0b1014" stroke-width="5" stroke-linecap="round"/></svg>
        </button>
      </form>
    </main>

    <nav class="system-nav">
      <button type="button" aria-label="Recent apps"><svg width="42" height="34" viewBox="0 0 42 34"><path d="M3 3H39M3 17H39M3 31H39" stroke="#80817f" stroke-width="5" stroke-linecap="round"/></svg></button>
      <button type="button" aria-label="Home"><svg width="42" height="42" viewBox="0 0 42 42"><circle cx="21" cy="21" r="18" fill="none" stroke="#80817f" stroke-width="5"/></svg></button>
      <button type="button" aria-label="Back"><svg width="26" height="40" viewBox="0 0 26 40"><path d="M23 3L3 20L23 37" fill="none" stroke="#80817f" stroke-width="5" stroke-linecap="round" stroke-linejoin="round"/></svg></button>
    </nav>
  </body>
</html>
```

FILE: styles.css
```css
* { box-sizing: border-box; }
body { margin: 0; min-height: 100vh; display: flex; flex-direction: column; background-color: #0b1014; color: #f7f8fa; font-family: Roboto, "Liberation Sans", sans-serif; }
p, h1 { margin: 0; font-weight: normal; }
svg { display: block; flex-shrink: 0; }
button { padding: 0; border: none; background: none; color: inherit; font: inherit; cursor: pointer; }
.defs { position: absolute; width: 0; height: 0; }
.icon-btn { display: flex; align-items: center; }

/* status bar */
.status-bar { display: flex; justify-content: space-between; align-items: center; padding: 45px 56px 27px; height: 112px; }
.status-left, .status-right { display: flex; align-items: center; }
.status-left { gap: 15px; }
.status-right { gap: 7px; font-weight: 600; font-size: 18px; line-height: 18px; }
.clock { font-size: 35px; line-height: 40px; font-weight: 500; }
.battery-level { font-size: 33px; line-height: 40px; font-weight: 500; }
.app-square { width: 32px; height: 32px; border-radius: 8px; background-color: #fff; }
.hbl { display: flex; flex-direction: column; align-items: center; margin: 0 5px 0 2px; font: bold 10px/10px "Liberation Sans", sans-serif; }
.volte, .speed, .signal { display: flex; flex-direction: column; }
.volte > span { display: flex; align-items: center; }
.speed { align-items: center; margin: 0 7px; }
.signal { line-height: 12px; }

/* chat header */
.chat-header { display: flex; align-items: center; height: 151px; padding: 0 55px 0 44px; border-bottom: 1px solid #1a2024; }
.avatar { display: flex; justify-content: center; align-items: center; flex-shrink: 0; width: 99px; height: 99px; margin-left: 55px; border-radius: 50%; background-color: #0a2c3b; color: #57b9e9; font-size: 44px; font-weight: 500; }
.chat-name { position: relative; display: flex; flex: 1; margin-left: 33px; font-size: 46px; line-height: 54px; white-space: nowrap; }
.chat-name .first { width: 188px; }
.chat-name .scribble { position: absolute; left: 22px; top: 2px; }
.header-actions { display: flex; align-items: center; gap: 79px; }
.menu-btn { margin-left: 6px; }

/* chat */
.chat { position: relative; flex: 1; display: flex; flex-direction: column; justify-content: space-between; overflow: hidden; }
.wallpaper { position: absolute; top: 0; left: 0; width: 100%; height: 100%; }
.doodles { fill: none; stroke: #20262a; stroke-width: 2; stroke-linecap: round; stroke-linejoin: round; }
.doodle-text { fill: none; stroke: #20262a; stroke-width: 2; font-family: "Open Sans", sans-serif; font-weight: bold; }
.messages { position: relative; display: flex; flex-direction: column; padding: 0 47px; }
.row { display: flex; margin-top: 29px; }
.row.sent { justify-content: flex-end; }
.row.next { margin-top: 6px; }
.bubble { position: relative; display: flex; border-radius: 34px; font-size: 44px; line-height: 52px; }
.meta { display: flex; align-items: center; gap: 12px; font-size: 33px; line-height: 40px; white-space: nowrap; }
.ticks { width: 44px; height: 30px; }
.emoji { display: inline-block; width: 60px; height: 74px; margin-right: 3px; vertical-align: -22px; }

.received .bubble { flex-direction: column; max-width: 89%; padding: 16px 24px 7px 27px; background-color: #1f272a; }
.received .meta { align-self: flex-end; margin-top: -26px; color: #969b9d; }
.received .short p { margin-right: 6px; }
.received .short .meta { margin-top: 18px; }
.received .tail { border-top-left-radius: 0; }
.received .tail::before { content: ""; position: absolute; top: 0; left: -19px; width: 20px; height: 28px; background-color: #1f272a; clip-path: path("M4 0H20V28L1 5Q-1 1 4 0Z"); }

.sent .bubble { padding: 16px 24px 11px 27px; background-color: #144d37; }
.sent p { margin-bottom: 11px; }
.sent .meta { align-self: flex-end; margin-left: 23px; color: #96b5a8; }
.sent .tail { border-top-right-radius: 0; }
.sent .tail::before { content: ""; position: absolute; top: 0; right: -19px; width: 20px; height: 28px; background-color: #144d37; clip-path: path("M0 0H16Q21 1 19 6L0 28Z"); }

.reaction { position: absolute; left: 21px; bottom: -61px; display: flex; justify-content: center; align-items: center; width: 84px; height: 74px; border: 3px solid #0b1014; border-radius: 37px; background-color: #1f272a; }
.after-reaction { margin-top: 75px; }

/* screenshot message */
.media-row { gap: 23px; margin-top: 0; }
.forward-btn { display: flex; justify-content: center; align-items: center; width: 88px; height: 88px; margin-top: 241px; border-radius: 50%; background-color: rgba(18, 27, 33, 0.85); }
.sent .media-bubble { flex-direction: column; flex: 0 1 776px; min-width: 0; padding: 0 10px 11px; border-radius: 0 0 34px 34px; }
.sent .quote { margin: -25px 0 11px; padding: 0 23px 14px; border-left: 11px solid #25c366; border-radius: 0 0 24px 24px; background-color: #174433; color: #94aca3; font-size: 39px; line-height: 48px; }
.media { position: relative; padding: 0 16px; border-radius: 26px; background-color: #01040e; overflow: hidden; }
.account-form { display: flex; flex-direction: column; gap: 35px; padding: 26px 42px 14px; border: solid #21344e; border-width: 0 2px; background-color: #04182c; }
.field { display: flex; flex-direction: column; gap: 19px; }
.field label { color: #7f899b; font: 27px/40px Inter, "Open Sans", sans-serif; }
.field input, .field select { width: 100%; height: 81px; padding: 0 31px; border: 2px solid #21344e; border-radius: 8px; background-color: #04182c; color: #bcc7d5; font: 27px Inter, "Open Sans", sans-serif; outline: none; }
.field select { padding: 0 26px; appearance: none; }
.select-field { position: relative; }
.select-field::after { content: ""; position: absolute; right: 21px; bottom: 36px; border: solid transparent; border-width: 12px 12px 0; border-top-color: #263b58; }
.input-group { position: relative; display: flex; }
.field .input-group input { border-right: none; border-radius: 8px 0 0 8px; }
.refresh-btn { display: flex; justify-content: center; align-items: center; flex: 0 0 93px; border-radius: 0 8px 8px 0; background-color: #8c67c9; }
.input-group .scribble { position: absolute; left: 49px; top: -17px; }
.media::after { content: ""; position: absolute; right: 0; bottom: 0; width: 420px; height: 130px; background: radial-gradient(ellipse at bottom right, rgba(28, 34, 38, 0.8), transparent 70%); pointer-events: none; }
.media-meta { position: absolute; z-index: 1; right: 0; bottom: 0; display: flex; align-items: center; gap: 10px; padding: 0 16px 9px 0; color: #e9edef; font-size: 33px; line-height: 40px; }
.media-meta .ticks { color: #8a9096; }

/* message box */
.composer { position: relative; display: flex; align-items: center; gap: 13px; margin-top: 23px; padding: 0 12px 12px 13px; }
.message-box { flex: 1; min-width: 0; display: flex; align-items: center; height: 130px; padding: 0 36px; border-radius: 65px; background-color: #1f272a; }
.message-input { flex: 1; min-width: 0; height: 60px; margin-left: 38px; padding: 0; border: none; background: none; color: #f7f8fa; font: 50px Roboto, sans-serif; outline: none; }
.message-input::placeholder { color: #8b9498; opacity: 1; }
.message-box .icon-btn:last-child { margin-left: 86px; }
.mic-btn { display: flex; justify-content: center; align-items: center; flex: 0 0 132px; height: 132px; border-radius: 50%; background-color: #25c366; }

/* system navigation */
.system-nav { display: grid; grid-template-columns: repeat(3, 1fr); height: 116px; padding: 0 81px; background-color: #000; }
.system-nav button { display: flex; justify-content: center; align-items: center; }
```
